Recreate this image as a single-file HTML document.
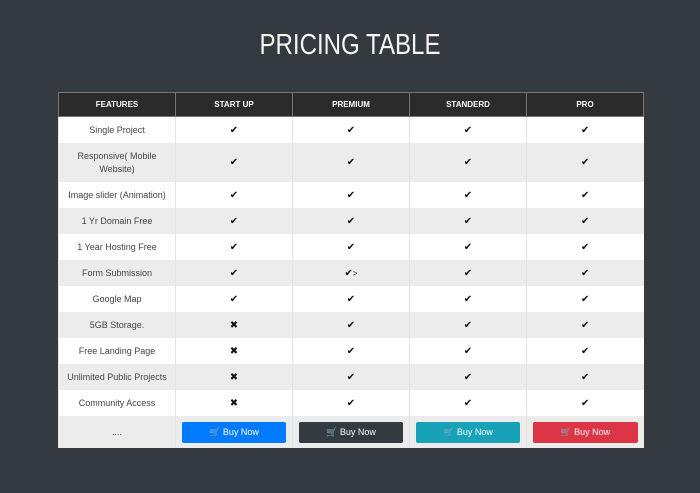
<!DOCTYPE html>
<html><head><style>
body{margin:0;width:700px;height:493px;background:#343a40;font-family:"Liberation Sans",sans-serif;overflow:hidden;position:relative}
h1{position:absolute;top:27px;left:0;width:700px;text-align:center;margin:0;color:#f4f4f4;font-weight:normal;font-size:29px;line-height:36px;transform:scaleX(0.83)}
table{position:absolute;left:58px;top:92px;width:586px;border-collapse:collapse;table-layout:fixed;font-size:9px;color:#444}
th{background:#2b2b2b;color:#fff;font-size:8px;font-weight:bold;height:23px;border:1px solid #777;padding:0}
td{text-align:center;height:26px;padding:0 8px;border-left:1px solid #e4e4e4;background:#fff}
tr.g td{background:#ececec}
tr.tall td{height:39px;line-height:13px}
tr.last td{height:32px}
.c{font-size:10px;color:#111}
.b{display:block;height:21px;line-height:21px;color:#fff;border-radius:2px;font-size:9px;margin:0 -2px}
</style></head><body>
<h1>PRICING TABLE</h1>
<table>
<tr><th>FEATURES</th><th>START UP</th><th>PREMIUM</th><th>STANDERD</th><th>PRO</th></tr>
<tr><td>Single Project</td><td class="c">✔</td><td class="c">✔</td><td class="c">✔</td><td class="c">✔</td></tr>
<tr class="tall g"><td>Responsive( Mobile Website)</td><td class="c">✔</td><td class="c">✔</td><td class="c">✔</td><td class="c">✔</td></tr>
<tr><td>Image slider (Animation)</td><td class="c">✔</td><td class="c">✔</td><td class="c">✔</td><td class="c">✔</td></tr>
<tr class="g"><td>1 Yr Domain Free</td><td class="c">✔</td><td class="c">✔</td><td class="c">✔</td><td class="c">✔</td></tr>
<tr><td>1 Year Hosting Free</td><td class="c">✔</td><td class="c">✔</td><td class="c">✔</td><td class="c">✔</td></tr>
<tr class="g"><td>Form Submission</td><td class="c">✔</td><td class="c">✔<span style="font-size:8px">&gt;</span></td><td class="c">✔</td><td class="c">✔</td></tr>
<tr><td>Google Map</td><td class="c">✔</td><td class="c">✔</td><td class="c">✔</td><td class="c">✔</td></tr>
<tr class="g"><td>5GB Storage.</td><td class="c">✖</td><td class="c">✔</td><td class="c">✔</td><td class="c">✔</td></tr>
<tr><td>Free Landing Page</td><td class="c">✖</td><td class="c">✔</td><td class="c">✔</td><td class="c">✔</td></tr>
<tr class="g"><td>Unlimited Public Projects</td><td class="c">✖</td><td class="c">✔</td><td class="c">✔</td><td class="c">✔</td></tr>
<tr><td>Community Access</td><td class="c">✖</td><td class="c">✔</td><td class="c">✔</td><td class="c">✔</td></tr>
<tr class="last g"><td>....</td>
<td><span class="b" style="background:#007bff">🛒 Buy Now</span></td>
<td><span class="b" style="background:#343a40">🛒 Buy Now</span></td>
<td><span class="b" style="background:#17a2b8">🛒 Buy Now</span></td>
<td><span class="b" style="background:#dc3545">🛒 Buy Now</span></td></tr>
</table>
</body></html>
